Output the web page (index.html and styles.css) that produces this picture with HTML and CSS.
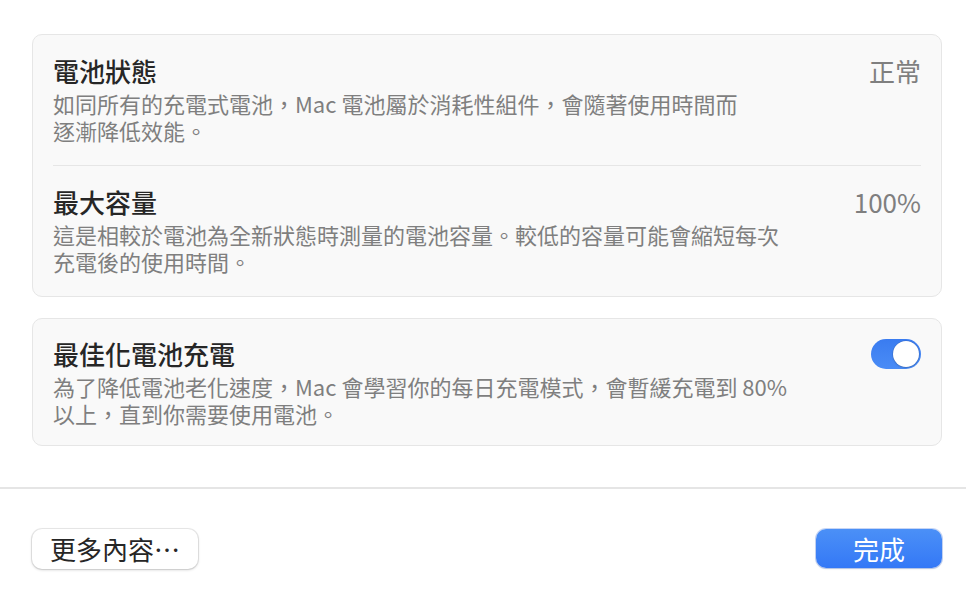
FILE: index.html
```html
<!DOCTYPE html>
<html lang="zh-Hant">
<head>
<meta charset="utf-8">
<link rel="stylesheet" href="styles.css">
</head>
<body>
<main class="sheet">
  <div class="content">
    <section class="card">
      <div class="row">
        <div class="text">
          <div class="title">電池狀態</div>
          <div class="desc">如同所有的充電式電池，Mac 電池屬於消耗性組件，會隨著使用時間而<br>逐漸降低效能。</div>
        </div>
        <div class="value">正常</div>
      </div>
      <div class="sep"></div>
      <div class="row">
        <div class="text">
          <div class="title">最大容量</div>
          <div class="desc">這是相較於電池為全新狀態時測量的電池容量。較低的容量可能會縮短每次<br>充電後的使用時間。</div>
        </div>
        <div class="value">100%</div>
      </div>
    </section>
    <section class="card">
      <div class="row compact">
        <div class="text">
          <div class="title">最佳化電池充電</div>
          <div class="desc">為了降低電池老化速度，Mac 會學習你的每日充電模式，會暫緩充電到 80%<br>以上，直到你需要使用電池。</div>
        </div>
        <div class="toggle"><span class="knob"></span></div>
      </div>
    </section>
  </div>
  <footer class="footer">
    <button class="btn">更多內容⋯</button>
    <button class="btn primary">完成</button>
  </footer>
</main>
</body>
</html>
```
FILE: styles.css
```css
html, body {
  margin: 0;
  padding: 0;
  background: #ffffff;
}
body {
  width: 966px;
  height: 600px;
  overflow: hidden;
  font-family: "Noto Sans CJK TC", "Noto Sans", sans-serif;
  color: #262626;
}
.sheet {
  display: flex;
  flex-direction: column;
  height: 600px;
}
.content {
  padding: 34px 24px 0 32px;
  display: flex;
  flex-direction: column;
  gap: 21px;
}
.card {
  background: #f9f9f9;
  border: 1px solid #e6e6e6;
  border-radius: 10px;
  padding: 0 20px;
}
.row {
  display: flex;
  justify-content: space-between;
  align-items: flex-start;
  padding: 20px 0 21px;
}
.row.compact {
  padding: 19px 0 18px;
}
.text {
  display: flex;
  flex-direction: column;
}
.title {
  font-size: 26px;
  line-height: 32px;
  font-weight: 500;
  color: #262626;
}
.desc {
  font-size: 22px;
  line-height: 27px;
  margin-top: 3px;
  color: #7f7f7f;
}
.value {
  font-size: 26px;
  line-height: 32px;
  color: #7f7f7f;
}
.sep {
  height: 1px;
  background: #e6e6e6;
}
.toggle {
  width: 50px;
  height: 30px;
  border-radius: 15px;
  background: linear-gradient(#3a7cf0, #4a8cf6);
  display: flex;
  align-items: center;
  justify-content: flex-end;
  padding: 0 2px;
  box-sizing: border-box;
  margin-top: 1px;
}
.knob {
  width: 26px;
  height: 26px;
  border-radius: 50%;
  background: #ffffff;
  box-shadow: 0 0 0 0.5px rgba(0,0,0,0.15), 0 1px 2px rgba(0,0,0,0.15);
}
.footer {
  margin-top: 41px;
  border-top: 2px solid #e5e5e5;
  padding: 40px 24px 0 32px;
  display: flex;
  justify-content: space-between;
  align-items: flex-start;
}
.btn {
  font-family: "Noto Sans CJK TC", "Noto Sans", sans-serif;
  font-size: 26px;
  line-height: 32px;
  height: 40px;
  padding: 0 18px;
  min-width: 126px;
  border: none;
  border-radius: 10px;
  background: #ffffff;
  color: #262626;
  box-shadow: 0 0 0 1px rgba(0,0,0,0.08), 0 1px 3px rgba(0,0,0,0.18);
}
.btn.primary {
  height: 39px;
  background: linear-gradient(#4b90f7, #3478f6);
  color: #ffffff;
  box-shadow: 0 0 0 1px rgba(30,90,220,0.25), 0 1px 2px rgba(0,0,0,0.12);
}
```
